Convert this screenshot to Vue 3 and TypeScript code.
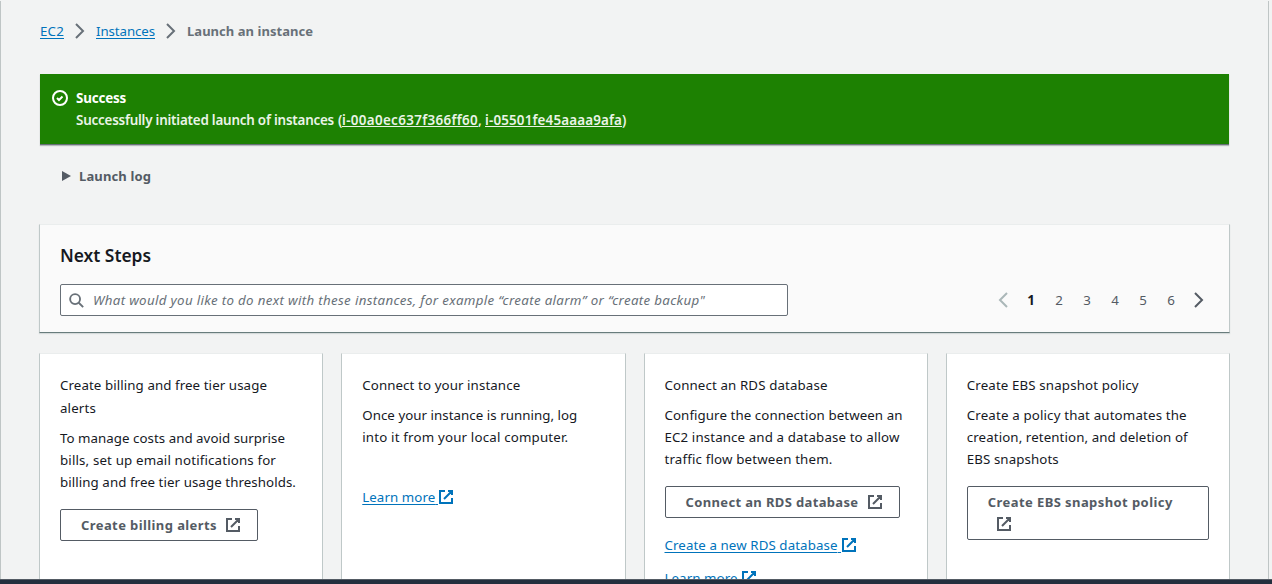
<script setup lang="ts">
import type { Directive } from 'vue'

interface Line { text: string; width: number }
interface Card {
  title: Line[]
  body: Line[]
  button?: Line
  wrap?: boolean
  links: Line[]
  gap?: boolean
}

// Spreads a line's letters so that it takes the given measure.
const vMeasure: Directive<HTMLElement, number> = {
  mounted(el, { value }) {
    const natural = el.getBoundingClientRect().width
    const count = (el.textContent ?? '').length
    el.style.letterSpacing = `${(value - natural) / count}px`
  },
}

const cards: Card[] = [
  {
    title: [{ text: 'Create billing and free tier usage', width: 207 }, { text: 'alerts', width: 36 }],
    body: [
      { text: 'To manage costs and avoid surprise', width: 225 },
      { text: 'bills, set up email notifications for', width: 216 },
      { text: 'billing and free tier usage thresholds.', width: 236 },
    ],
    button: { text: 'Create billing alerts', width: 136 },
    links: [],
  },
  {
    title: [{ text: 'Connect to your instance', width: 158 }],
    body: [
      { text: 'Once your instance is running, log', width: 215 },
      { text: 'into it from your local computer.', width: 206 },
    ],
    links: [{ text: 'Learn more', width: 73 }],
    gap: true,
  },
  {
    title: [{ text: 'Connect an RDS database', width: 163 }],
    body: [
      { text: 'Configure the connection between an', width: 238 },
      { text: 'EC2 instance and a database to allow', width: 235 },
      { text: 'traffic flow between them.', width: 168 },
    ],
    button: { text: 'Connect an RDS database', width: 173 },
    links: [{ text: 'Create a new RDS database', width: 173 }, { text: 'Learn more', width: 73 }],
  },
  {
    title: [{ text: 'Create EBS snapshot policy', width: 172 }],
    body: [
      { text: 'Create a policy that automates the', width: 220 },
      { text: 'creation, retention, and deletion of', width: 221 },
      { text: 'EBS snapshots', width: 92 },
    ],
    button: { text: 'Create EBS snapshot policy', width: 185 },
    wrap: true,
    links: [],
  },
]
const pages = [1, 2, 3, 4, 5, 6]
</script>

<template>
  <div class="screen">
    <main class="page">
      <nav class="crumbs">
        <a class="link"><span v-measure="24">EC2</span></a>
        <svg class="chev" viewBox="0 0 16 16"><path d="M4 1l7 7-7 7" /></svg>
        <a class="link"><span v-measure="59">Instances</span></a>
        <svg class="chev" viewBox="0 0 16 16"><path d="M4 1l7 7-7 7" /></svg>
        <b><span v-measure="126">Launch an instance</span></b>
      </nav>

      <section class="flash">
        <svg class="ok" viewBox="0 0 16 16"><circle cx="8" cy="8" r="7" /><path d="M5 8l2 2 3.5-3.5" /></svg>
        <div>
          <div class="line strong"><span v-measure="50">Success</span></div>
          <div class="line semi">
            <span v-measure="258">Successfully initiated launch of instances</span><span class="open">(</span><u v-measure="136">i-00a0ec637f366ff60</u><span class="comma">,</span><u v-measure="137">i-05501fe45aaaa9afa</u><span>)</span>
          </div>
        </div>
      </section>

      <div class="log">
        <svg viewBox="0 0 9 10"><path d="M0 0l9 5-9 5z" /></svg>
        <span v-measure="72">Launch log</span>
      </div>

      <section class="steps">
        <h2><span v-measure="91">Next Steps</span></h2>
        <div class="tools">
          <div class="search">
            <svg viewBox="0 0 16 16"><circle cx="6.5" cy="6.5" r="5.3" /><path d="M10.4 10.4l4.7 4.7" /></svg>
            <span v-measure="612">What would you like to do next with these instances, for example “create alarm” or “create backup"</span>
          </div>
          <div class="pager">
            <svg class="chev prev" viewBox="0 0 16 16"><path d="M12 1L5 8l7 7" /></svg>
            <span v-for="p in pages" :key="p" class="num" :class="{ current: p === 1 }">{{ p }}</span>
            <svg class="chev next" viewBox="0 0 16 16"><path d="M4 1l7 7-7 7" /></svg>
          </div>
        </div>
      </section>

      <div class="cards">
        <article v-for="(card, i) in cards" :key="i" class="card">
          <h3><div v-for="t in card.title" :key="t.text"><span v-measure="t.width">{{ t.text }}</span></div></h3>
          <div class="copy"><div v-for="t in card.body" :key="t.text"><span v-measure="t.width">{{ t.text }}</span></div></div>
          <button v-if="card.button" class="btn" :class="{ wrap: card.wrap }">
            <span v-measure="card.button.width">{{ card.button.text }}</span>
            <svg class="ext" viewBox="0 0 16 16"><path d="M10 2h4v4M6 10l8-8M14 9.05V14H2V2h5" /></svg>
          </button>
          <div class="links" :class="{ gap: card.gap }">
            <a v-for="l in card.links" :key="l.text" class="link"><span v-measure="l.width">{{ l.text }}</span><span class="sp">&nbsp;</span><svg class="ext" viewBox="0 0 16 16"><path d="M10 2h4v4M6 10l8-8M14 9.05V14H2V2h5" /></svg></a>
          </div>
        </article>
      </div>
    </main>
    <footer class="bar"></footer>
  </div>
</template>

<style>
body { margin: 0; background: #f2f3f3; overflow: hidden; }
</style>

<style scoped>
.screen { width: 1272px; height: 584px; display: flex; flex-direction: column; overflow: hidden; box-sizing: border-box; background: #f2f3f3; color: #16191f; font: 13.3px/22px "Noto Sans", sans-serif; }
.screen * { box-sizing: border-box; }
span, u { white-space: pre; }
.page { height: 578px; margin-top: 1px; flex: none; width: 1269px; padding: 19px 39px 0; border: solid #bfc5c5; border-width: 0 1px; overflow: hidden; }
.bar { height: 5px; flex: none; background: #232f3e; border-top: 1px solid #545b64; }
svg { fill: none; stroke: currentColor; flex: none; }
.link { color: #0073bb; text-decoration: underline; text-underline-offset: 2px; }
.crumbs { display: flex; align-items: center; height: 22px; color: #687078; }
.crumbs b { font-size: 13px; }
.chev { width: 16px; height: 16px; stroke-width: 2; margin: 0 8px; }
.flash { display: flex; height: 71px; margin-top: 32px; padding: 13px 12px; background: #1d8102; color: #fff; border-bottom: 1px solid #687078; box-shadow: 0 1px 1px #b4baba; }
.ok { width: 16px; height: 16px; margin: 3px 8px 0 0; stroke-width: 2; }
.line { display: flex; height: 22px; font-size: 13.4px; }
.strong { font-weight: 700; }
.semi { font-weight: 600; color: #eaf4e7; }
.open { width: 4px; margin-left: 4px; }
.comma { width: 7px; }
.log { display: flex; align-items: center; height: 22px; margin: 20px 0 0 22px; color: #545b64; font-weight: 700; font-size: 13px; }
.log svg { width: 9px; height: 10px; margin-right: 8px; fill: currentColor; stroke: none; }
.steps { height: 109px; margin: 37px 0 0 -1px; width: 1191px; padding: 19px 20px 0; background: #fafafa; border: 1px solid #bfc8c8; border-top-color: #eaeded; border-bottom-color: #687c7c; box-shadow: 0 1px 1px #d5dada; }
h2 { margin: 0; font-size: 17.4px; line-height: 22px; font-weight: 600; }
.tools { display: flex; justify-content: space-between; align-items: center; margin-top: 18px; }
.search { display: flex; align-items: center; width: 728px; height: 32px; padding-left: 8px; border: 1px solid #687078; border-radius: 2px; background: #fff; color: #687078; font-style: italic; }
.search svg { width: 15px; height: 15px; stroke-width: 2; margin-right: 9px; }
.pager { display: flex; align-items: center; margin-right: -4px; color: #545b64; }
.pager .chev { margin: 0 6px; }
.prev { color: #aab7b8; }
.num { width: 28px; text-align: center; }
.current { color: #16191f; font-weight: 700; }
.cards { display: grid; grid-template-columns: repeat(4, 1fr); gap: 18px; margin: 20px -1px 0; width: 1191px; }
.card { height: 240px; padding: 20px; background: #fff; border: 1px solid #bfc8c8; border-top-color: #eaeded; }
h3 { margin: 0 0 7px; font-size: 13.3px; line-height: 23px; font-weight: 400; }
.copy { line-height: 22px; }
.btn { display: flex; align-items: center; width: max-content; height: 32px; margin: 16px 0 0; padding: 0 16px 0 20px; gap: 8px; border: 1px solid #545b64; border-radius: 2px; background: #fff; color: #545b64; font: 700 13px/22px "Noto Sans", sans-serif; }
.btn.wrap { flex-direction: column; align-items: flex-start; gap: 0; width: 242px; height: 54px; padding-top: 4px; }
.btn.wrap svg { margin: 3px 0 0 8px; }
.ext { width: 16px; height: 16px; stroke-width: 2; }
.links { display: flex; flex-direction: column; margin-top: 16px; gap: 11px; }
.links.gap { margin-top: 38px; }
.links .link { display: flex; align-items: center; height: 22px; }
.sp { width: 3px; overflow: hidden; }
</style>
